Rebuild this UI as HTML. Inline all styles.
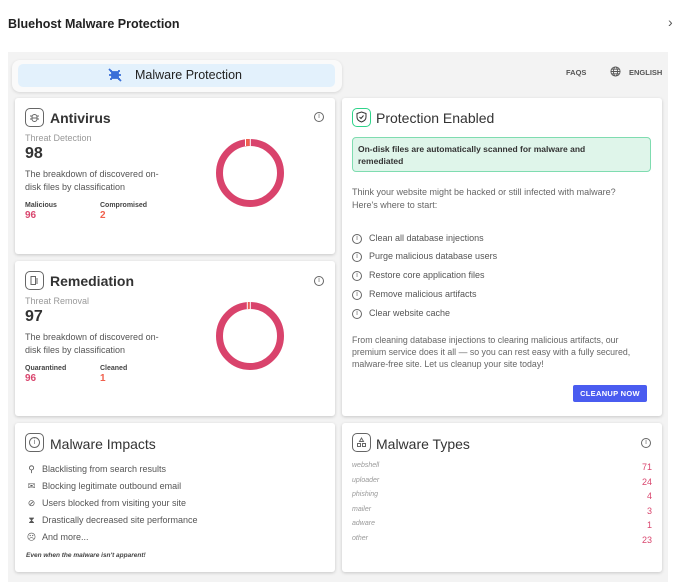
<!DOCTYPE html>
<html><head><style>
*{margin:0;padding:0;box-sizing:border-box}
body{width:676px;height:582px;background:#fff;font-family:"Liberation Sans",sans-serif;color:#333;position:relative;overflow:hidden}
.a{position:absolute}
.card{position:absolute;background:#fff;border-radius:3px;box-shadow:0 1px 3px rgba(0,0,0,.18)}
.h{position:absolute;font-size:14px;color:#333;line-height:16px}
.ib{position:absolute;width:19px;height:19px;border:1.3px solid #666;border-radius:5px;display:flex;align-items:center;justify-content:center}
.sm{font-size:9px;color:#555}
.li{position:absolute;font-size:9px;color:#555;display:flex;align-items:center;line-height:11px}
.ci{display:block;width:10px;height:10px;border:1px solid #666;border-radius:50%;font-size:7px;line-height:8px;text-align:center;color:#666;margin-right:7px;flex:none}
.ic{display:inline-block;width:11px;margin-right:5px;text-align:center;color:#555}
</style></head><body>
<div class="a" style="left:8px;top:17px;font-size:12.5px;font-weight:bold;color:#222">Bluehost Malware Protection</div>
<div class="a" style="left:668px;top:14px;font-size:14px;color:#555">›</div>
<div class="a" style="left:8px;top:52px;width:660px;height:530px;background:#f3f3f3"></div>
<div class="a" style="left:12px;top:60px;width:330px;height:32px;background:#fafafa;border-radius:8px;box-shadow:0 1px 3px rgba(0,0,0,.12)"></div>
<div class="a" style="left:18px;top:64px;width:317px;height:23px;background:#e3f1fc;border-radius:5px"></div>
<svg class="a" style="left:107px;top:67px" width="16" height="16" viewBox="0 0 16 16"><g stroke="#3a6fd8" stroke-width="1.8" fill="none"><path d="M2 2L14 14"/><path d="M5 5h6v6h-6z" fill="#3a6fd8"/><path d="M2 8h3M11 8h3M3 4h2M3 12h2M11 4h2M11 12h2"/></g></svg>
<div class="a" style="left:135px;top:68px;font-size:12.5px;color:#222">Malware Protection</div>
<div class="a" style="left:566px;top:68px;font-size:7.5px;font-weight:bold;color:#555">FAQS</div>
<svg class="a" style="left:610px;top:66px" width="11" height="11" viewBox="0 0 12 12" fill="none" stroke="#555" stroke-width="1"><circle cx="6" cy="6" r="5"/><ellipse cx="6" cy="6" rx="2.2" ry="5"/><path d="M1 6h10M2 3.5h8M2 8.5h8"/></svg>
<div class="a" style="left:629px;top:68px;font-size:7.5px;font-weight:bold;color:#555">ENGLISH</div>

<!-- Antivirus -->
<div class="card" style="left:15px;top:98px;width:320px;height:156px"></div>
<div class="ib" style="left:25px;top:108px"><svg width="11" height="11" viewBox="0 0 11 11" fill="none" stroke="#666" stroke-width="1"><rect x="3" y="2.5" width="5" height="7" rx="2.5"/><path d="M1 4h2M8 4h2M1 7h2M8 7h2M3.5 6h4"/></svg></div>
<div class="h" style="left:50px;top:110px;font-weight:bold">Antivirus</div>
<div class="a" style="left:314px;top:112px"><span class="ci">i</span></div>
<div class="a sm" style="left:25px;top:133px;color:#999">Threat Detection</div>
<div class="a" style="left:25px;top:145px;font-size:16px;font-weight:bold;color:#333">98</div>
<div class="a sm" style="left:25px;top:168px;line-height:12.5px;width:143px">The breakdown of discovered on-disk files by classification</div>
<div class="a" style="left:25px;top:202px;font-size:7px;font-weight:bold;color:#444">Malicious</div>
<div class="a" style="left:25px;top:210px;font-size:10px;font-weight:bold;color:#d9466e">96</div>
<div class="a" style="left:100px;top:202px;font-size:7px;font-weight:bold;color:#444">Compromised</div>
<div class="a" style="left:100px;top:210px;font-size:10px;font-weight:bold;color:#f0604d">2</div>
<svg class="a" style="left:215px;top:138px" width="70" height="70" viewBox="0 0 70 70"><circle cx="35" cy="35" r="30.5" fill="none" stroke="#d9436c" stroke-width="7"/><path d="M31 4.6A30.5 30.5 0 0 1 34.5 4.5" stroke="#f0604d" stroke-width="7" fill="none"/><path d="M30.5 1v7M35.3 1v7" stroke="#fff" stroke-width="1"/></svg>

<!-- Remediation -->
<div class="card" style="left:15px;top:261px;width:320px;height:155px"></div>
<div class="ib" style="left:25px;top:271px"><svg width="11" height="11" viewBox="0 0 11 11" fill="none" stroke="#666" stroke-width="1"><path d="M2 1.5h4.5v8H2zM6.5 4h2.5M6.5 6h2.5M6.5 8h2.5"/></svg></div>
<div class="h" style="left:50px;top:273px;font-weight:bold">Remediation</div>
<div class="a" style="left:314px;top:276px"><span class="ci">i</span></div>
<div class="a sm" style="left:25px;top:296px;color:#999">Threat Removal</div>
<div class="a" style="left:25px;top:308px;font-size:16px;font-weight:bold;color:#333">97</div>
<div class="a sm" style="left:25px;top:331px;line-height:12.5px;width:143px">The breakdown of discovered on-disk files by classification</div>
<div class="a" style="left:25px;top:365px;font-size:7px;font-weight:bold;color:#444">Quarantined</div>
<div class="a" style="left:25px;top:373px;font-size:10px;font-weight:bold;color:#d9466e">96</div>
<div class="a" style="left:100px;top:365px;font-size:7px;font-weight:bold;color:#444">Cleaned</div>
<div class="a" style="left:100px;top:373px;font-size:10px;font-weight:bold;color:#f0604d">1</div>
<svg class="a" style="left:215px;top:301px" width="70" height="70" viewBox="0 0 70 70"><circle cx="35" cy="35" r="30.5" fill="none" stroke="#d9436c" stroke-width="7"/><path d="M32.8 4.6A30.5 30.5 0 0 1 34.5 4.5" stroke="#f0604d" stroke-width="7" fill="none"/><path d="M32.3 1v7M35.3 1v7" stroke="#fff" stroke-width="1"/></svg>

<!-- Protection -->
<div class="card" style="left:342px;top:98px;width:320px;height:318px"></div>
<div class="a" style="left:352px;top:108px;width:19px;height:19px;border:1.5px solid #2fd38a;border-radius:5px"></div>
<svg class="a" style="left:356px;top:111px" width="11" height="12" viewBox="0 0 11 12" fill="none" stroke="#333" stroke-width="1"><path d="M5.5 1L10 2.5V6c0 2.5-2 4.2-4.5 5C3 10.2 1 8.5 1 6V2.5z"/><path d="M3.5 6l1.5 1.5L7.5 4.5"/></svg>
<div class="h" style="left:376px;top:110px;font-size:14px">Protection Enabled</div>
<div class="a" style="left:352px;top:137px;width:299px;height:35px;background:#dff5ea;border:1px solid #7fdcb0;border-radius:4px;padding:5px 40px 5px 5px;font-size:8.5px;font-weight:bold;color:#333;line-height:12px">On-disk files are automatically scanned for malware and remediated</div>
<div class="a sm" style="left:352px;top:186px;line-height:13px;width:290px;color:#666">Think your website might be hacked or still infected with malware? Here's where to start:</div>
<div class="li" style="left:352px;top:233px"><span class="ci">i</span>Clean all database injections</div>
<div class="li" style="left:352px;top:251px"><span class="ci">i</span>Purge malicious database users</div>
<div class="li" style="left:352px;top:270px"><span class="ci">i</span>Restore core application files</div>
<div class="li" style="left:352px;top:289px"><span class="ci">i</span>Remove malicious artifacts</div>
<div class="li" style="left:352px;top:308px"><span class="ci">i</span>Clear website cache</div>
<div class="a sm" style="left:352px;top:334px;line-height:12px;width:300px;color:#666;font-size:8.8px">From cleaning database injections to clearing malicious artifacts, our premium service does it all — so you can rest easy with a fully secured, malware-free site. Let us cleanup your site today!</div>
<div class="a" style="left:573px;top:385px;width:74px;height:17px;background:#4a5cf0;border-radius:2px;color:#fff;font-size:7.5px;font-weight:bold;text-align:center;line-height:17px;letter-spacing:.3px">CLEANUP NOW</div>

<!-- Impacts -->
<div class="card" style="left:15px;top:423px;width:320px;height:149px"></div>
<div class="ib" style="left:25px;top:433px"><span class="ci" style="margin:0;width:11px;height:11px;line-height:9px">i</span></div>
<div class="h" style="left:50px;top:436px">Malware Impacts</div>
<div class="li" style="left:26px;top:464px"><span class="ic">⚲</span>Blacklisting from search results</div>
<div class="li" style="left:26px;top:481px"><span class="ic">✉</span>Blocking legitimate outbound email</div>
<div class="li" style="left:26px;top:498px"><span class="ic">⊘</span>Users blocked from visiting your site</div>
<div class="li" style="left:26px;top:515px"><span class="ic">⧗</span>Drastically decreased site performance</div>
<div class="li" style="left:26px;top:532px"><span class="ic">☹</span>And more...</div>
<div class="a" style="left:26px;top:552px;font-size:6.5px;font-style:italic;font-weight:bold;color:#444">Even when the malware isn't apparent!</div>

<!-- Types -->
<div class="card" style="left:342px;top:423px;width:320px;height:149px"></div>
<div class="ib" style="left:352px;top:433px"><svg width="11" height="11" viewBox="0 0 11 11" fill="none" stroke="#666" stroke-width="1"><path d="M5.5 1L7.5 4.5H3.5z"/><rect x="1.5" y="6.5" width="3" height="3"/><rect x="6.5" y="6.5" width="3" height="3"/></svg></div>
<div class="h" style="left:376px;top:436px">Malware Types</div>
<div class="a" style="left:641px;top:438px"><span class="ci">i</span></div>
<div class="a" style="left:352px;top:459px;width:300px;font-size:7px;font-style:italic;color:#999;line-height:14.6px">webshell<br>uploader<br>phishing<br>mailer<br>adware<br>other</div>
<div class="a" style="left:600px;top:460px;width:52px;font-size:9px;color:#d9466e;text-align:right;line-height:14.6px">71<br>24<br>4<br>3<br>1<br>23</div>
</body></html>
